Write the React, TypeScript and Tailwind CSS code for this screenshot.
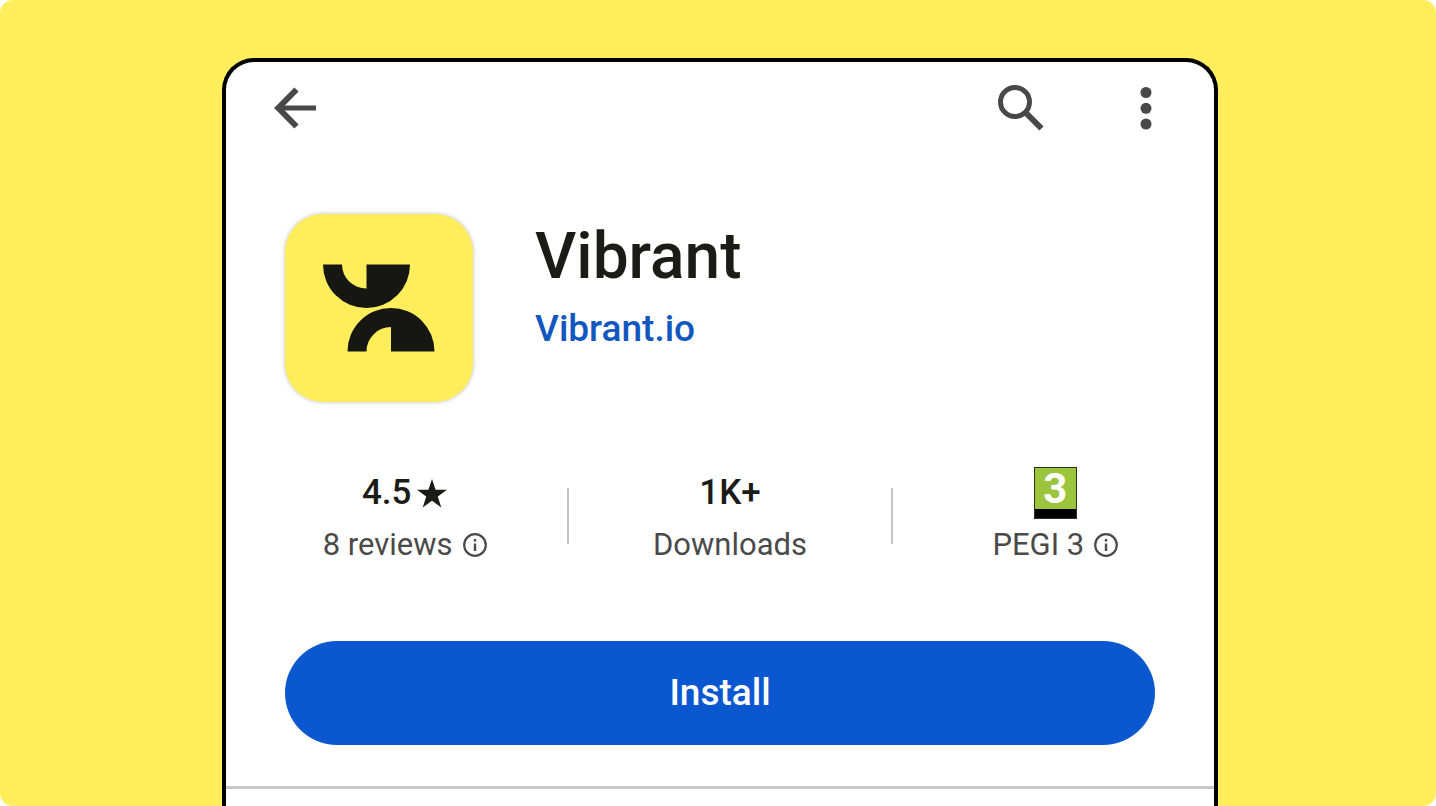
import React from 'react';

function BackIcon() {
  return (
    <svg width="42" height="42" viewBox="0 0 42 42" fill="none" stroke="currentColor" strokeWidth="6" aria-hidden="true">
      <path d="M22.500 2.500 4.300 21 22.500 39.500" />
      <path d="M4 21h38" strokeWidth="5" />
    </svg>
  );
}

function SearchIcon() {
  return (
    <svg width="46" height="46" viewBox="0 0 46 46" fill="none" stroke="currentColor" aria-hidden="true">
      <circle cx="17" cy="17" r="14.5" strokeWidth="5" />
      <path d="M28.500 28.500 43.500 43.500" strokeWidth="6" />
    </svg>
  );
}

function MoreIcon() {
  return (
    <svg width="12" height="44" viewBox="0 0 12 44" fill="currentColor" aria-hidden="true">
      <circle cx="6" cy="6.5" r="5.5" />
      <circle cx="6" cy="22.3" r="5.5" />
      <circle cx="6" cy="38" r="5.5" />
    </svg>
  );
}

function InfoIcon() {
  return (
    <svg width="24" height="24" viewBox="0 0 24 24" fill="none" stroke="currentColor" aria-hidden="true">
      <circle cx="12" cy="12" r="10.8" strokeWidth="2.2" />
      <path d="M12 10.500v7.500M12 6v2.600" strokeWidth="2.4" />
    </svg>
  );
}

function StarIcon() {
  return (
    <svg width="30" height="29" viewBox="0 0 30 29" fill="currentColor" aria-hidden="true">
      <path d="M15 0l3.600 10.800H30l-9.200 6.800L24.300 28.500 15 21.800 5.700 28.500l3.500-10.900L0 10.800h11.400z" />
    </svg>
  );
}

function AppLogo() {
  return (
    <div className="flex size-[188px] shrink-0 items-center justify-center rounded-[38px] bg-[#ffee5c] text-[#161613] shadow-[0_0_4px_rgba(60,64,67,0.35)]">
      <svg width="112" height="88" viewBox="0 0 112 88" fill="currentColor" aria-label="Vibrant logo">
        <path d="M0 .5h19a24.500 24 0 0 0 24.500 24V.5H87A43.500 43.500 0 0 1 0 .5z" />
        <path d="M24.500 87.500a43.500 43.500 0 0 1 87 0H68V63a24.500 24.500 0 0 0-24.500 24.500z" />
      </svg>
    </div>
  );
}

function PegiBadge() {
  return (
    <span className="flex h-[52px] w-[43px] flex-col border border-[#2c2f22] bg-black">
      <span className="flex h-[41px] items-center justify-center bg-[#9bc53d] text-[42px] leading-none font-bold text-white">
        3
      </span>
    </span>
  );
}

interface StatProps {
  value: React.ReactNode;
  label: string;
  info?: boolean;
}

function Stat({ value, label, info }: StatProps) {
  return (
    <div className="flex flex-col items-center">
      <div className="flex h-[52px] items-center gap-1.5 text-[35px] font-medium text-[#1b1b18]">{value}</div>
      <div className="flex h-[52px] items-center gap-2.5 text-[31px] text-[#4a4a4a]">
        {label}
        {info && (
          <button type="button" aria-label={`About ${label}`}>
            <InfoIcon />
          </button>
        )}
      </div>
    </div>
  );
}

export default function App() {
  return (
    <div className="h-screen bg-white font-['Roboto',sans-serif]">
      <main className="flex h-full flex-col overflow-hidden rounded-[13px] bg-[#ffee5c] pt-[58px] pr-[218px] pl-[222px]">
        <div className="flex-1 overflow-hidden rounded-t-[32px] border-4 border-b-0 border-black bg-white">
          {/* Top bar */}
          <header className="flex h-[92px] items-center pr-[62px] pl-12 text-[#484848]">
            <button type="button" aria-label="Back">
              <BackIcon />
            </button>
            <button type="button" aria-label="Search" className="ml-auto">
              <SearchIcon />
            </button>
            <button type="button" aria-label="More options" className="ml-24">
              <MoreIcon />
            </button>
          </header>

          {/* App identity */}
          <section className="flex gap-[62px] px-[59px] pt-[60px]">
            <AppLogo />
            <div className="pt-[7px]">
              <h1 className="text-[64px] leading-[72px] font-medium text-[#1b1b18]">Vibrant</h1>
              <a href="#developer" className="mt-3 block text-[37px] leading-[48px] font-medium text-[#1257c0]">
                Vibrant.io
              </a>
            </div>
          </section>

          {/* Rating, downloads and age rating */}
          <section className="mt-[65px] -mr-1 ml-4 grid grid-cols-3">
            <Stat
              value={
                <>
                  4.5
                  <StarIcon />
                </>
              }
              label="8 reviews"
              info
            />
            <div className="relative">
              <span className="absolute top-[21px] left-0 h-14 w-[2px] bg-[#c4c4c4]" />
              <Stat value="1K+" label="Downloads" />
              <span className="absolute top-[21px] right-0 h-14 w-[2px] bg-[#c4c4c4]" />
            </div>
            <Stat value={<PegiBadge />} label="PEGI 3" info />
          </section>

          <div className="px-[59px] pt-[70px] pb-[41px]">
            <button
              type="button"
              className="h-[104px] w-full rounded-full bg-[#0b57d0] text-[37px] font-medium text-white"
            >
              Install
            </button>
          </div>
          <hr className="border-t-3 border-[#c8c8c8]" />
        </div>
      </main>
    </div>
  );
}
